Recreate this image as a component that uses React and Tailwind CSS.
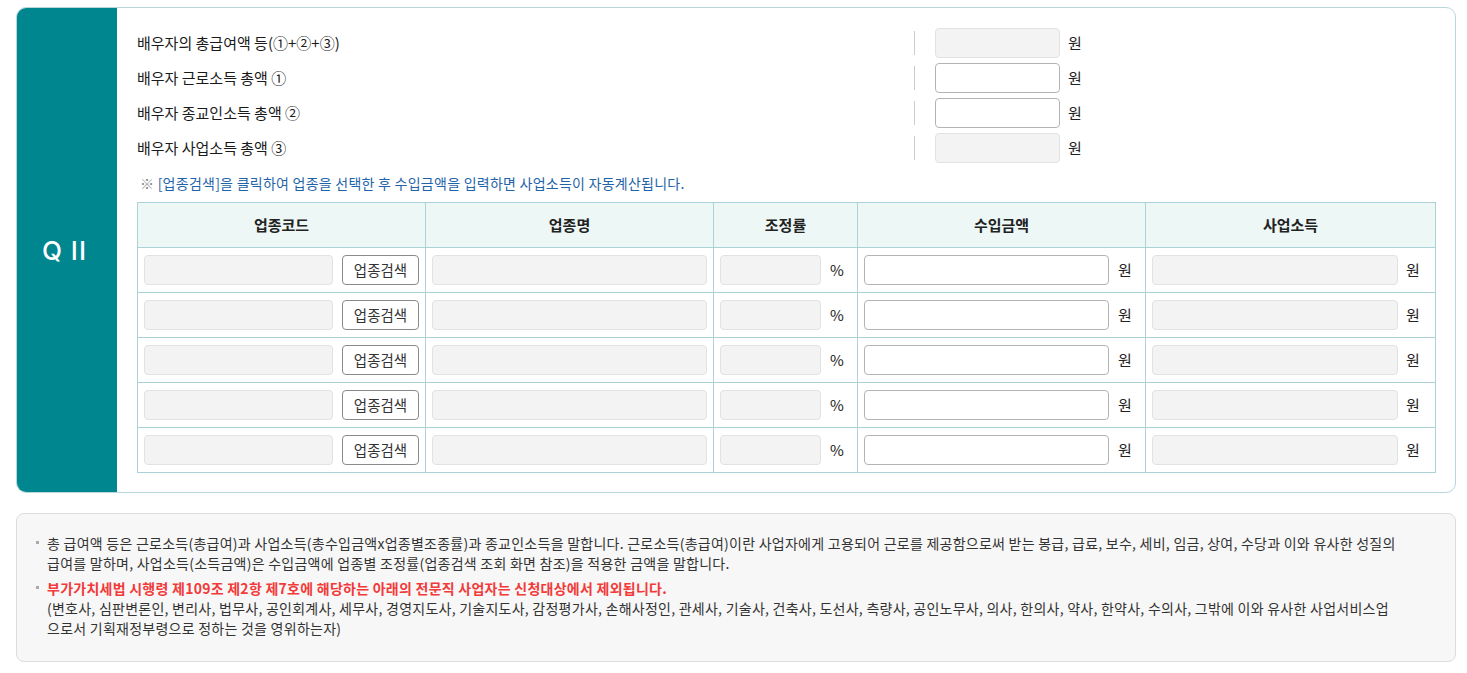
import React from "react";

const F = "font-['Noto_Sans_CJK_KR','Noto_Sans',sans-serif]";

function Dis({ w, h = "h-[30px]" }) {
  return <div className={`${w} ${h} shrink-0 rounded-[4px] border border-[#e2e2e2] bg-[#f3f3f3]`} />;
}
function Edit({ w, h = "h-[30px]" }) {
  return <div className={`${w} ${h} shrink-0 rounded-[4px] border border-[#b4b4b4] bg-white`} />;
}

const topRows = [
  { label: "배우자의 총급여액 등(①+②+③)", edit: false },
  { label: "배우자 근로소득 총액 ①", edit: true },
  { label: "배우자 종교인소득 총액 ②", edit: true },
  { label: "배우자 사업소득 총액 ③", edit: false },
];

export default function App() {
  return (
    <div className={`${F} min-h-[673px] bg-white pl-[16px] pr-[11px] pt-[7px] text-[#222]`}>
      {/* main box */}
      <div className="flex h-[486px] w-[1440px] overflow-hidden rounded-[10px] border border-[#b7d8db]">
        <div className="flex w-[100px] shrink-0 items-center justify-center bg-[#00868f] pr-[5px]">
          <span className="font-['Inter','Liberation_Sans',sans-serif] text-[26px] font-medium tracking-[1px] text-white">Q II</span>
        </div>
        <div className="flex-1 px-[20px] pt-[20px]">
          <div className="flex flex-col gap-[5px]">
            {topRows.map((r, i) => (
              <div key={i} className="flex h-[30px] items-center">
                <div className="w-[777px] text-[15px] leading-[20px] text-[#1a1a1a]">{r.label}</div>
                <div className="h-[24px] w-px bg-[#cccccc]" />
                <div className="ml-[20px]">
                  {r.edit ? <Edit w="w-[125px]" /> : <Dis w="w-[125px]" />}
                </div>
                <span className="ml-[8px] text-[15px]">원</span>
              </div>
            ))}
          </div>
          <div className="mt-[10px] pl-[3px] text-[14px] leading-[20px] tracking-[0.25px] text-[#1f64a8]">
            <span className="text-[#888]">※</span> [업종검색]을 클릭하여 업종을 선택한 후 수입금액을 입력하면 사업소득이 자동계산됩니다.
          </div>
          <table className="mt-[9px] w-[1298px] table-fixed border-collapse text-[15px]">
            <colgroup>
              <col className="w-[288px]" />
              <col className="w-[288px]" />
              <col className="w-[144px]" />
              <col className="w-[288px]" />
              <col className="w-[290px]" />
            </colgroup>
            <thead>
              <tr className="h-[45px] bg-[#edf7f6]">
                {["업종코드", "업종명", "조정률", "수입금액", "사업소득"].map((h) => (
                  <th key={h} className="border border-[#abd2d6] text-center font-bold text-[#222]">
                    {h}
                  </th>
                ))}
              </tr>
            </thead>
            <tbody>
              {[0, 1, 2, 3, 4].map((i) => (
                <tr key={i} className="h-[45px]">
                  <td className="border border-[#abd2d6] px-[6px]">
                    <div className="flex items-center gap-[9px]">
                      <Dis w="w-[189px]" />
                      <button className="h-[30px] w-[78px] rounded-[4px] border border-[#8a8a8a] bg-white text-[14.5px] text-[#333]">
                        업종검색
                      </button>
                    </div>
                  </td>
                  <td className="border border-[#abd2d6] px-[6px]">
                    <Dis w="w-[275px]" />
                  </td>
                  <td className="border border-[#abd2d6] px-[6px]">
                    <div className="flex items-center">
                      <Dis w="w-[101px]" />
                      <span className="ml-[9px]">%</span>
                    </div>
                  </td>
                  <td className="border border-[#abd2d6] px-[6px]">
                    <div className="flex items-center">
                      <Edit w="w-[245px]" />
                      <span className="ml-[9px]">원</span>
                    </div>
                  </td>
                  <td className="border border-[#abd2d6] px-[6px]">
                    <div className="flex items-center">
                      <Dis w="w-[246px]" />
                      <span className="ml-[8px]">원</span>
                    </div>
                  </td>
                </tr>
              ))}
            </tbody>
          </table>
        </div>
      </div>

      {/* notes */}
      <div className="mt-[20px] h-[149px] w-[1440px] rounded-[8px] border border-[#dcdcdc] bg-[#f7f7f7] pl-[19px] pt-[19px]">
        <div className="flex flex-col gap-[5px] text-[14px] leading-[20px] tracking-[0.25px] text-[#333]">
          <div className="flex">
            <span className="mt-[8px] h-[3px] w-[3px] shrink-0 bg-[#aaaaaa]" />
            <p className="ml-[8px] whitespace-nowrap">
              총 급여액 등은 근로소득(총급여)과 사업소득(총수입금액x업종별조종률)과 종교인소득을 말합니다. 근로소득(총급여)이란 사업자에게 고용되어 근로를 제공함으로써 받는 봉급, 급료, 보수, 세비, 임금, 상여, 수당과 이와 유사한 성질의
              <br />
              급여를 말하며, 사업소득(소득금액)은 수입금액에 업종별 조정률(업종검색 조회 화면 참조)을 적용한 금액을 말합니다.
            </p>
          </div>
          <div className="flex">
            <span className="mt-[8px] h-[3px] w-[3px] shrink-0 bg-[#aaaaaa]" />
            <p className="ml-[8px] whitespace-nowrap">
              <span className="font-bold text-[#f23a3a]">
                부가가치세법 시행령 제109조 제2항 제7호에 해당하는 아래의 전문직 사업자는 신청대상에서 제외됩니다.
              </span>
              <br />
              (변호사, 심판변론인, 변리사, 법무사, 공인회계사, 세무사, 경영지도사, 기술지도사, 감정평가사, 손해사정인, 관세사, 기술사, 건축사, 도선사, 측량사, 공인노무사, 의사, 한의사, 약사, 한약사, 수의사, 그밖에 이와 유사한 사업서비스업
              <br />
              으로서 기획재정부령으로 정하는 것을 영위하는자)
            </p>
          </div>
        </div>
      </div>
    </div>
  );
}
